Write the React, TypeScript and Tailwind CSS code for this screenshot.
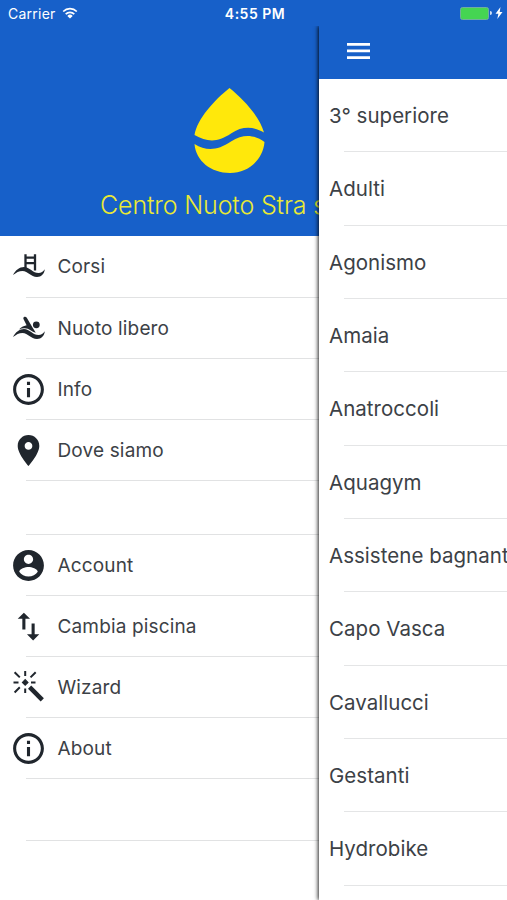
import type { ReactNode } from "react";

type DrawerItem = { label: string; icon: ReactNode };

// Material style glyph on the 24px grid
function Glyph({ d }: { d: string }) {
  return (
    <svg viewBox="0 0 24 24" className="h-[37px] w-[37px]" fill="currentColor">
      <path d={d} />
    </svg>
  );
}

const INFO =
  "M11 7h2v2h-2zm0 4h2v6h-2zm1-9C6.48 2 2 6.48 2 12s4.48 10 10 10 10-4.48 10-10S17.52 2 12 2zm0 18c-4.41 0-8-3.59-8-8s3.59-8 8-8 8 3.59 8 8-3.59 8-8 8z";
const PLACE =
  "M12 2C8.13 2 5 5.13 5 9c0 5.25 7 13 7 13s7-7.75 7-13c0-3.87-3.13-7-7-7zm0 9.5c-1.38 0-2.5-1.12-2.5-2.5s1.12-2.5 2.5-2.5 2.5 1.12 2.5 2.5-1.12 2.5-2.5 2.5z";
const ACCOUNT =
  "M12 2C6.48 2 2 6.48 2 12s4.48 10 10 10 10-4.48 10-10S17.52 2 12 2zm0 3c1.66 0 3 1.34 3 3s-1.34 3-3 3-3-1.34-3-3 1.34-3 3-3zm0 14.2c-2.5 0-4.71-1.28-6-3.22.03-1.99 4-3.08 6-3.08 1.99 0 5.97 1.09 6 3.08-1.29 1.94-3.5 3.22-6 3.22z";
const SWAP =
  "M9 3L5 6.99h3V14h2V6.99h3L9 3zm7 14.01V10h-2v7.01h-3L15 21l4-3.99h-3z";

const WAVE =
  "M3 27C5.500 22 9.500 18.900 14 18.900c5.500 0 9 6.100 14.500 6.100 2.700 0 4.800-1.500 6.300-3.800-.6 4.700-3.300 7.700-7.800 7.700-6.300 0-9-6-14.500-6-3.500 0-6.300 1.600-9.500 4.100z";

function PoolIcon() {
  return (
    <svg viewBox="0 0 37 37" className="h-[37px] w-[37px]" fill="currentColor">
      <path d={WAVE} />
      <path
        d="M15.500 6.300V20M25 6.300V22.500M15.500 9.700H25M15.500 15.200H25"
        fill="none"
        stroke="currentColor"
        strokeWidth="2.300"
      />
    </svg>
  );
}

function SwimmerIcon() {
  return (
    <svg viewBox="0 0 37 37" className="h-[37px] w-[37px]" fill="currentColor">
      <path d={WAVE} />
      <circle cx="26.300" cy="14.800" r="3.400" />
      <path d="M13.800 7.300c.9-.8 2.300-.5 3 .5l5.700 9.700 3.300 5.200c-4-.7-6.300-4.400-11.300-4.400-2 0-3.800.4-5.500 1.200 2-2.200 4.300-3.500 7.600-4.200l-3-6.100c-.4-.7-.3-1.500.2-1.900z" />
    </svg>
  );
}

function WandIcon() {
  return (
    <svg
      viewBox="0 0 37 37"
      className="h-[37px] w-[37px]"
      fill="none"
      stroke="currentColor"
      strokeWidth="2"
    >
      <path d="M15.200 2v5M15.200 19.500v4.500M3.500 13.400h5M21 13.400h4.500M4.600 3.200l5.200 5.200M25.700 3.200l-5.200 5.200M4.600 23.500l5.200-5.200" />
      <path
        d="M15.200 10.700l2.700 2.700-2.700 2.700-2.700-2.700z"
        fill="currentColor"
        strokeWidth="1.200"
      />
      <path d="M19.600 18.200l12.700 12.700" strokeWidth="4.500" />
    </svg>
  );
}

const primaryItems: DrawerItem[] = [
  { label: "Corsi", icon: <PoolIcon /> },
  { label: "Nuoto libero", icon: <SwimmerIcon /> },
  { label: "Info", icon: <Glyph d={INFO} /> },
  { label: "Dove siamo", icon: <Glyph d={PLACE} /> },
];

const secondaryItems: DrawerItem[] = [
  { label: "Account", icon: <Glyph d={ACCOUNT} /> },
  { label: "Cambia piscina", icon: <Glyph d={SWAP} /> },
  { label: "Wizard", icon: <WandIcon /> },
  { label: "About", icon: <Glyph d={INFO} /> },
];

const courses = [
  "3° superiore",
  "Adulti",
  "Agonismo",
  "Amaia",
  "Anatroccoli",
  "Aquagym",
  "Assistene bagnanti",
  "Capo Vasca",
  "Cavallucci",
  "Gestanti",
  "Hydrobike",
];

function StatusBar() {
  return (
    <div className="grid h-[26px] grid-cols-3 items-center bg-[#1760c9] pl-2 pr-1 text-white">
      <div className="flex items-center gap-1.5 text-[14px] tracking-[0.25px]">
        Carrier
        <svg viewBox="0 0 16 12" className="h-3 w-4">
          <path
            d="M1.200 4.500a9.700 9.700 0 0 1 13.600 0M3.700 7.200a6.100 6.100 0 0 1 8.600 0"
            fill="none"
            stroke="currentColor"
            strokeWidth="1.700"
          />
          <path d="M8 11.500L5.300 8.900a3.900 3.900 0 0 1 5.400 0z" fill="currentColor" />
        </svg>
      </div>
      <div className="pr-px text-center text-[14px] font-semibold tracking-[0.5px]">
        4:55 PM
      </div>
      <div className="flex items-center justify-end">
        <div className="h-[13px] w-[29px] rounded-[2.500px] border border-[#6fae9f] bg-[#45d552]" />
        <div className="ml-px h-1 w-[2px] rounded-r bg-white/80" />
        <svg viewBox="0 0 8 12" className="ml-[3px] h-3 w-2" fill="currentColor">
          <path d="M5.500 0L.5 6.700h2.900L2.300 12l5.200-7H4.700z" />
        </svg>
      </div>
    </div>
  );
}

function DrawerRow({ item }: { item: DrawerItem }) {
  return (
    <div className="relative flex h-[61.100px] shrink-0 items-center pl-[10.300px] after:absolute after:bottom-0 after:left-[26px] after:right-0 after:h-px after:bg-[#e1e2e3]">
      <span className="text-[#20262d]">{item.icon}</span>
      <span className="ml-[10.200px] pt-[1.500px] text-[19px] tracking-[0.15px]">
        {item.label}
      </span>
    </div>
  );
}

function Drawer() {
  return (
    <aside className="flex w-[319px] shrink-0 flex-col overflow-hidden bg-white">
      <div className="flex h-[210.450px] shrink-0 flex-col bg-[#1760c9]">
        <svg
          viewBox="0 0 72 86"
          className="ml-[193px] mt-[61px] h-[86px] w-[72px] shrink-0"
          fill="#ffe80b"
        >
          <path d="M36.500 1C50 12 66.500 29 71 45.500C62 40 50 38 38 46.500C24 56 14 55 1.500 48C4 32 21 13.500 36.500 1z" />
          <path d="M1.500 57C13 64 24 64 38 54.500C51 46 62 48 71.500 55C70 73 55 86 37 86C18 86 3 74 1.500 57z" />
        </svg>
        <div className="ml-[100px] mt-[15px] whitespace-nowrap text-[25px] font-light leading-[34px] tracking-[-0.15px] text-[#e9e934]">
          Centro Nuoto Stra srl
        </div>
      </div>
      {primaryItems.map((item) => (
        <DrawerRow key={item.label} item={item} />
      ))}
      <div className="ml-[26px] h-[54px] shrink-0 border-b border-[#e1e2e3]" />
      {secondaryItems.map((item) => (
        <DrawerRow key={item.label} item={item} />
      ))}
      <div className="ml-[26px] h-[61.500px] shrink-0 border-b border-[#e1e2e3]" />
    </aside>
  );
}

export default function App() {
  return (
    <div className="flex h-[900px] w-[507px] flex-col overflow-hidden bg-white font-['Inter',sans-serif] text-[#3c4146]">
      <StatusBar />
      <div className="flex min-h-0 flex-1 overflow-hidden">
        <Drawer />
        <main className="relative min-w-0 flex-1 bg-white shadow-[-1px_0_4px_rgba(0,0,0,0.850)]">
          <header className="flex h-[53px] items-center bg-[#1760c9] pb-[3px] pl-[27.500px]">
            <button aria-label="Menu">
              <svg viewBox="0 0 23 16" className="h-4 w-[23px]" fill="#fff">
                <path d="M0 0h23v2.700H0zM0 6.600h23v2.700H0zM0 13.200h23v2.700H0z" />
              </svg>
            </button>
          </header>
          <div className="overflow-hidden">
            {courses.map((name) => (
              <div
                key={name}
                className="relative flex h-[73.350px] items-center whitespace-nowrap pl-[10px] pt-[1.500px] text-[20.500px] tracking-[0.030px] after:absolute after:bottom-0 after:left-[25px] after:right-0 after:h-px after:bg-[#e4e5e6]"
              >
                {name}
              </div>
            ))}
          </div>
        </main>
      </div>
    </div>
  );
}
